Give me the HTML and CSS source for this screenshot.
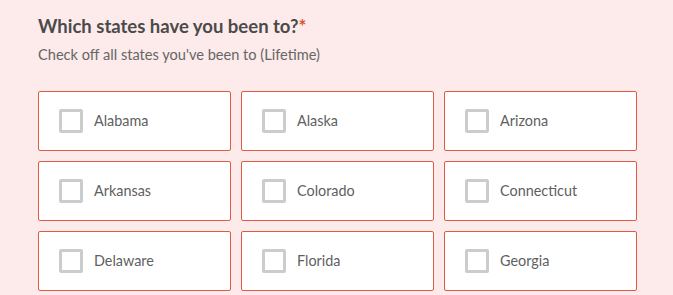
FILE: index.html
```html
<!DOCTYPE html>
<html lang="en">
<head>
    <meta charset="UTF-8">
    <title>States</title>
    <link rel="stylesheet" href="styles.css">
</head>
<body>

<div class="question">
    <h2>Which states have you been to?<span class="req">*</span></h2>
    <p class="hint">Check off all states you've been to (Lifetime)</p>

    <div class="options">
        <label class="option"><span class="box"></span>Alabama</label>
        <label class="option"><span class="box"></span>Alaska</label>
        <label class="option"><span class="box"></span>Arizona</label>
        <label class="option"><span class="box"></span>Arkansas</label>
        <label class="option"><span class="box"></span>Colorado</label>
        <label class="option"><span class="box"></span>Connecticut</label>
        <label class="option"><span class="box"></span>Delaware</label>
        <label class="option"><span class="box"></span>Florida</label>
        <label class="option"><span class="box"></span>Georgia</label>
    </div>
</div>

</body>
</html>
```

FILE: styles.css
```css
body {
    margin: 0;
    background-color: #fcebea;
    font-family: Lato, "Open Sans", sans-serif;
}

.question {
    padding: 14px 36px 0 38px;
}

h2 {
    margin: 0;
    font-size: 18.5px;
    font-weight: bold;
    color: #4a4a4a;
    line-height: 24px;
}

.req {
    color: #d9532f;
}

.hint {
    margin: 7px 0 0;
    font-size: 14.6px;
    color: #666;
    line-height: 20px;
}

.options {
    display: grid;
    grid-template-columns: repeat(3, 193px);
    gap: 10px;
    margin-top: 26px;
}

.option {
    display: flex;
    align-items: center;
    height: 57px;
    padding: 0 0 1px 20px;
    background: #fff;
    border: 1px solid #e05a3f;
    border-radius: 2px;
    font-size: 14.4px;
    color: #5f5f5f;
}

.box {
    width: 18px;
    height: 18px;
    border: 3px solid #cccccc;
    border-radius: 2px;
    margin-right: 11px;
}
```
